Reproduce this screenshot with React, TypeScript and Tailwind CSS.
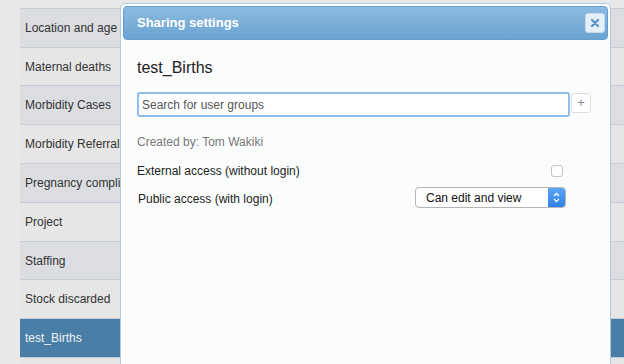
import React from "react";

const rows: { label: string; cls: string }[] = [
  { label: "Location and age", cls: "h-[39px] bg-[#dbdde1] text-[#333]" },
  { label: "Maternal deaths", cls: "h-[38px] bg-[#e6e6e6] text-[#333]" },
  { label: "Morbidity Cases", cls: "h-[39px] bg-[#dbdde1] text-[#333]" },
  { label: "Morbidity Referrals", cls: "h-[39px] bg-[#e6e6e6] text-[#333]" },
  { label: "Pregnancy complications", cls: "h-[39px] bg-[#dbdde1] text-[#333]" },
  { label: "Project", cls: "h-[39px] bg-[#e6e6e6] text-[#333]" },
  { label: "Staffing", cls: "h-[38px] bg-[#dbdde1] text-[#333]" },
  { label: "Stock discarded", cls: "h-[39px] bg-[#e6e6e6] text-[#333]" },
  { label: "test_Births", cls: "h-[39px] bg-[#4a7ea6] text-[#eef3f8]" },
  { label: "", cls: "h-[39px] bg-[#e6e6e6] text-[#333]" },
];

export default function App() {
  return (
    <div
      className="relative w-[624px] h-[364px] overflow-hidden bg-[#e8e8e8]"
      style={{ fontFamily: '"Liberation Sans", Arial, Helvetica, sans-serif' }}
    >
      {/* background table */}
      <div className="ml-[20px] mt-[8px] border-t border-[#c8cdd5]">
        {rows.map((r, i) => (
          <div
            key={i}
            className={`flex items-center pl-[5px] border-b border-[#c8cdd5] text-[12px] whitespace-nowrap ${r.cls}`}
          >
            {r.label}
          </div>
        ))}
      </div>

      {/* dialog */}
      <div className="absolute left-[120px] top-[3px] w-[491px] h-[380px] rounded-[5px] border border-[#aecbe3] bg-[#fbfdfd] p-[2px]">
        <div className="flex items-center justify-between h-[34px] rounded-[4px] border border-[#629ecf] bg-gradient-to-b from-[#8dbbe0] to-[#6aa4d1] pl-[13px] pr-[2px]">
          <span className="text-[13px] font-bold text-white">Sharing settings</span>
          <div className="flex items-center justify-center w-[20px] h-[20px] rounded-[3px] border border-[#c4daee] bg-[#e4eff9]">
            <svg width="10" height="10" viewBox="0 0 10 10">
              <path d="M2 2 L8 8 M8 2 L2 8" stroke="#5a94c6" strokeWidth="2.3" strokeLinecap="round" />
            </svg>
          </div>
        </div>

        <div className="pl-[14px] w-[480px]">
          <div className="mt-[18px] h-[20px] flex items-center text-[16px] text-[#222]">test_Births</div>

          <div className="mt-[14px] flex items-start gap-[1px]">
            <div className="shrink-0 w-[433px] h-[25px] rounded-[3px] border-2 border-[#8fbdec] bg-white flex items-center pl-[3px] text-[12px] text-[#555]">
              Search for user groups
            </div>
            <div className="shrink-0 mt-[1px] w-[20px] h-[20px] rounded-[3px] border border-[#dedede] bg-white flex items-center justify-center text-[13px] text-[#888]">
              +
            </div>
          </div>

          <div className="mt-[17px] h-[16px] flex items-center text-[12px] text-[#777]">Created by: Tom Wakiki</div>

          <div className="mt-[13px] w-[429px] h-[16px] flex items-center justify-between text-[12px] text-[#222]">
            <span>External access (without login)</span>
            <div className="mr-[3px] w-[12px] h-[12px] rounded-[3px] border border-[#c2c2c2] bg-white" />
          </div>

          <div className="mt-[8px] w-[429px] flex items-center justify-between text-[12px] text-[#222]">
            <span className="pl-[1px] mt-[2px]">Public access (with login)</span>
            <div className="flex w-[151px] h-[21px] rounded-[4px] border border-[#b5b5b5] bg-white overflow-hidden">
              <div className="flex-1 flex items-center pl-[10px] text-[12px] text-[#111]">Can edit and view</div>
              <div className="w-[17px] flex items-center justify-center bg-gradient-to-b from-[#5aa6f7] to-[#2f7fe6]">
                <svg width="9" height="13" viewBox="0 0 9 13">
                  <path d="M2 5 L4.5 2.5 L7 5 M2 8 L4.5 10.5 L7 8" stroke="white" strokeWidth="1.3" fill="none" />
                </svg>
              </div>
            </div>
          </div>
        </div>
      </div>
    </div>
  );
}
